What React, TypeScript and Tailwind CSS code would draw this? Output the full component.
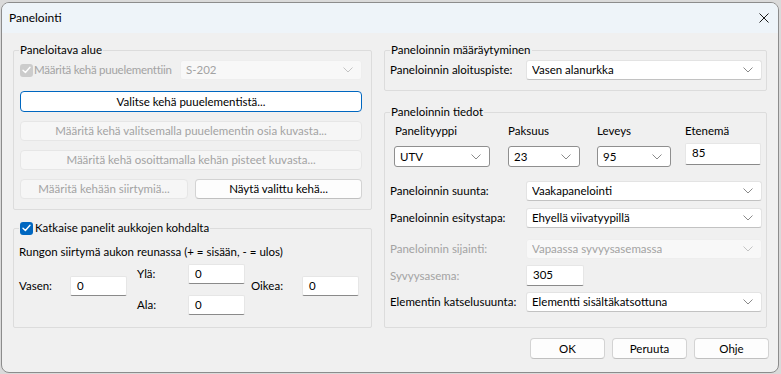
import React from "react";

function Chevron({ color = "#8a8a8a" }: { color?: string }) {
  return (
    <svg width="10" height="6" viewBox="0 0 10 6" className="shrink-0">
      <path d="M0.5 0.5 L5 5 L9.5 0.5" fill="none" stroke={color} strokeWidth="1" />
    </svg>
  );
}

function Check() {
  return (
    <svg width="9" height="8" viewBox="0 0 9 8">
      <path d="M1 4.2 L3.4 6.5 L8 1.3" fill="none" stroke="#fff" strokeWidth="1.4" strokeLinecap="round" strokeLinejoin="round" />
    </svg>
  );
}

function CheckBox({ disabled }: { disabled?: boolean }) {
  return (
    <div
      className={`w-[13px] h-[13px] rounded-[3px] flex items-center justify-center shrink-0 ${
        disabled ? "bg-[#cccccc]" : "bg-[#0067c0]"
      }`}
    >
      <Check />
    </div>
  );
}

function Select({ text, className = "", disabled }: { text: string; className?: string; disabled?: boolean }) {
  return (
    <div
      className={`flex items-center justify-between rounded-[3px] pl-[5px] pr-[8px] border ${
        disabled
          ? "bg-[#f8f8f8] border-[#eeeeee] text-[#a3a3a3]"
          : "bg-white border-[#e3e3e3] border-b-[#c2c2c2] text-black"
      } ${className}`}
    >
      <span className="leading-[16px] truncate">{text}</span>
      <Chevron color={disabled ? "#c4c4c4" : "#8a8a8a"} />
    </div>
  );
}

function Combo({ text, className = "" }: { text: string; className?: string }) {
  return (
    <div
      className={`flex items-center justify-between rounded-[3px] pl-[5px] pr-[8px] border border-[#8f8f8f] bg-white ${className}`}
    >
      <span className="leading-[16px]">{text}</span>
      <Chevron color="#8a8a8a" />
    </div>
  );
}

function Input({ value, className = "" }: { value: string; className?: string }) {
  return (
    <div
      className={`flex items-start pt-[1px] pl-[6px] bg-white border border-[#e6e6e6] border-b-[#8a8a8a] rounded-[2px] ${className}`}
    >
      <span className="leading-[16px]">{value}</span>
    </div>
  );
}

function Btn({
  text,
  className = "",
  disabled,
  focused,
}: {
  text: string;
  className?: string;
  disabled?: boolean;
  focused?: boolean;
}) {
  return (
    <div
      className={`flex items-center justify-center rounded-[4px] border leading-[16px] whitespace-nowrap ${
        disabled
          ? "bg-[#f6f6f6] border-[#e6e6e6] text-[#a3a3a3]"
          : focused
          ? "bg-white border-[#0067c0] text-black"
          : "bg-[#fdfdfd] border-[#d3d3d3] border-b-[#c0c0c0] text-black"
      } ${className}`}
    >
      {text}
    </div>
  );
}

function Legend({ children }: { children: React.ReactNode }) {
  return (
    <div className="absolute left-[5px] -top-[9px] px-[1px] bg-[#f0f0f0] leading-[16px] flex items-center gap-[2px] whitespace-nowrap">
      {children}
    </div>
  );
}

export default function App() {
  return (
    <div className="w-[781px] h-[374px] bg-[#dadada] pt-[2px] pl-[1px] font-['Lato',sans-serif] text-[11.5px] text-black whitespace-nowrap">
      <div className="w-[778px] h-[371px] border border-[#8c8c8c] rounded-[8px] overflow-hidden bg-[#f0f0f0] flex flex-col">
        {/* Title bar */}
        <div className="h-[30px] bg-[#eef4f9] flex items-center justify-between pl-[7px] pr-[9px] shrink-0">
          <span className="leading-[16px] text-[12px]">Panelointi</span>
          <svg width="10" height="10" viewBox="0 0 10 10">
            <path d="M0.5 0.5 L9.5 9.5 M9.5 0.5 L0.5 9.5" stroke="#1a1a1a" strokeWidth="1" />
          </svg>
        </div>

        {/* Body */}
        <div className="flex px-[11px] gap-[12px]">
          {/* Left column */}
          <div className="w-[359px] flex flex-col">
            <div className="mt-[17px] h-[160px] relative border border-[#dcdcdc] rounded-[2px]">
              <Legend>Paneloitava alue</Legend>
              <div className="pl-[6px] pr-[9px] pt-[9px] flex flex-col">
                <div className="flex items-center h-[20px]">
                  <div className="w-[160px] flex items-center gap-[1px] text-[#a3a3a3]">
                    <CheckBox disabled />
                    <span className="leading-[16px] tracking-[-0.25px]">Määritä kehä puuelementtiin</span>
                  </div>
                  <Select text="S-202" disabled className="w-[182px] h-[20px]" />
                </div>
                <Btn text="Valitse kehä puuelementistä..." focused className="mt-[11px] h-[21px] w-full" />
                <Btn
                  text="Määritä kehä valitsemalla puuelementin osia kuvasta..."
                  disabled
                  className="mt-[9px] h-[20px] w-full"
                />
                <Btn
                  text="Määritä kehä osoittamalla kehän pisteet kuvasta..."
                  disabled
                  className="mt-[9px] h-[20px] w-full"
                />
                <div className="mt-[9px] flex gap-[7px] h-[20px]">
                  <Btn text="Määritä kehään siirtymiä..." disabled className="w-[168px] h-[20px]" />
                  <Btn text="Näytä valittu kehä..." className="flex-1 h-[20px]" />
                </div>
              </div>
            </div>

            <div className="mt-[18px] h-[100px] relative border border-[#dcdcdc] rounded-[2px]">
              <Legend>
                <CheckBox />
                <span>Katkaise panelit aukkojen kohdalta</span>
              </Legend>
              <div className="pl-[5px] pt-[15px] flex flex-col">
                <span className="leading-[16px]">Rungon siirtymä aukon reunassa (+ = sisään, - = ulos)</span>
                <div className="mt-[4px] flex items-start">
                  <div className="w-[51px] mt-[12px] h-[20px] flex items-center">Vasen:</div>
                  <Input value="0" className="w-[57px] h-[20px] mt-[12px]" />
                  <div className="ml-[10px] flex flex-col">
                    <div className="flex items-center h-[20px]">
                      <div className="w-[51px]">Ylä:</div>
                      <Input value="0" className="w-[57px] h-[20px]" />
                    </div>
                    <div className="flex items-center h-[20px] mt-[11px]">
                      <div className="w-[51px]">Ala:</div>
                      <Input value="0" className="w-[57px] h-[20px]" />
                    </div>
                  </div>
                  <div className="ml-[6px] w-[51px] mt-[12px] h-[20px] flex items-center">Oikea:</div>
                  <Input value="0" className="w-[57px] h-[20px] mt-[12px]" />
                </div>
              </div>
            </div>
          </div>

          {/* Right column */}
          <div className="w-[383px] flex flex-col">
            <div className="mt-[17px] h-[41px] relative border border-[#dcdcdc] rounded-[2px]">
              <Legend>Paneloinnin määräytyminen</Legend>
              <div className="pl-[5px] pr-[4px] pt-[9px]">
                <div className="flex items-center h-[20px]">
                  <div className="w-[136px]">Paneloinnin aloituspiste:</div>
                  <Select text="Vasen alanurkka" className="w-[236px] h-[20px]" />
                </div>
              </div>
            </div>

            <div className="mt-[21px] h-[216px] relative border border-[#dcdcdc] rounded-[2px]">
              <Legend>Paneloinnin tiedot</Legend>
              <div className="pl-[5px] pt-[10px] flex flex-col">
                <div className="ml-[4px] flex items-start">
                  <div className="w-[96px] flex flex-col">
                    <span className="leading-[16px] pl-[1px]">Panelityyppi</span>
                    <Combo text="UTV" className="mt-[7px] h-[21px]" />
                  </div>
                  <div className="ml-[18px] w-[72px] flex flex-col">
                    <span className="leading-[16px]">Paksuus</span>
                    <Combo text="23" className="mt-[7px] h-[21px]" />
                  </div>
                  <div className="ml-[17px] w-[74px] flex flex-col">
                    <span className="leading-[16px]">Leveys</span>
                    <Combo text="95" className="mt-[7px] h-[21px]" />
                  </div>
                  <div className="ml-[14px] w-[76px] flex flex-col">
                    <span className="leading-[16px]">Etenemä</span>
                    <Input value="85" className="mt-[4px] h-[22px]" />
                  </div>
                </div>
                <div className="mt-[14px] flex items-center h-[20px]">
                  <div className="w-[136px]">Paneloinnin suunta:</div>
                  <Select text="Vaakapanelointi" className="w-[236px] h-[20px]" />
                </div>
                <div className="mt-[7px] flex items-center h-[20px]">
                  <div className="w-[136px]">Paneloinnin esitystapa:</div>
                  <Select text="Ehyellä viivatyypillä" className="w-[236px] h-[20px]" />
                </div>
                <div className="mt-[11px] flex items-center h-[20px]">
                  <div className="w-[136px] text-[#a3a3a3]">Paneloinnin sijainti:</div>
                  <Select text="Vapaassa syvyysasemassa" disabled className="w-[236px] h-[20px]" />
                </div>
                <div className="mt-[6px] flex items-center h-[21px]">
                  <div className="w-[136px] text-[#a3a3a3]">Syvyysasema:</div>
                  <Input value="305" className="w-[58px] h-[21px]" />
                </div>
                <div className="mt-[6px] flex items-center h-[20px]">
                  <div className="w-[136px]">Elementin katselusuunta:</div>
                  <Select text="Elementti sisältäkatsottuna" className="w-[236px] h-[20px]" />
                </div>
              </div>
            </div>
          </div>
        </div>

        {/* Buttons */}
        <div className="mt-[10px] flex justify-end gap-[7px] pr-[9px]">
          <Btn text="OK" className="w-[75px] h-[21px]" />
          <Btn text="Peruuta" className="w-[75px] h-[21px]" />
          <Btn text="Ohje" className="w-[75px] h-[21px]" />
        </div>
      </div>
    </div>
  );
}
